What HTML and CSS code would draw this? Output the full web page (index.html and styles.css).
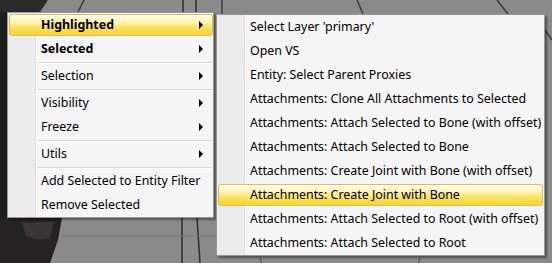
FILE: index.html
```html
<!DOCTYPE html>
<html lang="en">

<head>
    <meta charset="UTF-8">
    <meta name="viewport" content="width=device-width, initial-scale=1.0">
    <title>Context Menu</title>
    <link rel="stylesheet" href="styles.css">
</head>

<body>
    <svg class="scene" width="552" height="263" viewBox="0 0 552 263">
        <rect width="552" height="263" fill="#8a8a8a" />
        <!-- dark figure -->
        <path d="M0 0 H48 L40 12 H0 Z" fill="#2a2a2a" />
        <path d="M0 12 H8 V218 H0 Z" fill="#1e1e1e" />
        <path d="M0 218 H62 L58 240 L50 263 H0 Z" fill="#242222" />
        <path d="M22 222 Q36 224 54 221 L50 238 Q38 242 26 236 Z" fill="#3b3535" />
        <!-- tile lines -->
        <path d="M84 0 L78 12" stroke="#3a3a3a" stroke-width="1.5" />
        <path d="M183 0 V12 M196 0 V12" stroke="#2e2e2e" stroke-width="1.5" />
        <path d="M222 0 V14" stroke="#3a3a3a" stroke-width="1.5" />
        <path d="M357 0 L363 14" stroke="#3a3a3a" stroke-width="1.5" />
        <path d="M497 0 L508 14" stroke="#3a3a3a" stroke-width="1.5" />
        <path d="M545 30 L552 40" stroke="#3a3a3a" stroke-width="1.5" />
        <path d="M182 218 V263 M197 218 L200 263" stroke="#2e2e2e" stroke-width="1.5" />
        <path d="M62 236 H216" stroke="#747474" />
        <path d="M260 258 L262 263 M420 258 L418 263" stroke="#4a4a4a" />
    </svg>

    <div class="stage">
        <div class="menu menu-main">
            <div class="item bold active"><span class="label">Highlighted</span><span class="arrow"></span></div>
            <div class="item bold"><span class="label">Selected</span><span class="arrow"></span></div>
            <div class="sep"></div>
            <div class="item"><span class="label">Selection</span><span class="arrow"></span></div>
            <div class="sep"></div>
            <div class="item"><span class="label">Visibility</span><span class="arrow"></span></div>
            <div class="item"><span class="label">Freeze</span><span class="arrow"></span></div>
            <div class="sep"></div>
            <div class="item"><span class="label">Utils</span><span class="arrow"></span></div>
            <div class="sep"></div>
            <div class="item"><span class="label">Add Selected to Entity Filter</span></div>
            <div class="item"><span class="label">Remove Selected</span></div>
        </div>

        <div class="menu menu-sub">
            <div class="item"><span class="label">Select Layer 'primary'</span></div>
            <div class="item"><span class="label">Open VS</span></div>
            <div class="item"><span class="label">Entity: Select Parent Proxies</span></div>
            <div class="item"><span class="label">Attachments: Clone All Attachments to Selected</span></div>
            <div class="item"><span class="label">Attachments: Attach Selected to Bone (with offset)</span></div>
            <div class="item"><span class="label">Attachments: Attach Selected to Bone</span></div>
            <div class="item"><span class="label">Attachments: Create Joint with Bone (with offset)</span></div>
            <div class="item active"><span class="label">Attachments: Create Joint with Bone</span></div>
            <div class="item"><span class="label">Attachments: Attach Selected to Root (with offset)</span></div>
            <div class="item"><span class="label">Attachments: Attach Selected to Root</span></div>
        </div>
    </div>
</body>

</html>
```

FILE: styles.css
```css
body {
    margin: 0;
    width: 552px;
    height: 263px;
    overflow: hidden;
    position: relative;
    font-family: "Segoe UI", "Noto Sans", sans-serif;
    font-size: 12.4px;
    color: #000000;
}

.scene {
    position: absolute;
    left: 0;
    top: 0;
}

.stage {
    position: relative;
    display: flex;
    align-items: flex-start;
    gap: 2px;
    padding: 12px 0 0 7px;
}

/* menu box with gutter on the left */
.menu {
    display: flex;
    flex-direction: column;
    border: 1px solid #979797;
    background-color: #f5f5f5;
    background-image: linear-gradient(to right,
            #ebebeb 0, #ebebeb 27px,
            #dedede 27px, #dedede 28px,
            #ffffff 28px, #ffffff 29px,
            transparent 29px);
    box-shadow: 2px 2px 2px rgba(0, 0, 0, 0.4);
}

.menu-main {
    width: 205px;
}

.menu-sub {
    width: 327px;
    margin-top: 2px;
}

.item {
    display: flex;
    align-items: center;
    height: 22px;
    margin: 1px 1px 1px 1px;
    padding: 0 9px 0 31px;
    border: 1px solid transparent;
    border-radius: 3px;
    box-sizing: border-box;
}

.menu-main .item {
    margin-right: 0;
}

.label {
    flex: 1;
    white-space: nowrap;
    line-height: 16px;
}

.bold .label {
    font-weight: bold;
}

.arrow {
    width: 0;
    height: 0;
    border-top: 4px solid transparent;
    border-bottom: 4px solid transparent;
    border-left: 4px solid #000000;
}

.item.active {
    border-color: #e2bd52;
    background: linear-gradient(to bottom, #fffbe8 0%, #fff3b8 35%, #fbe468 60%, #f7d840 85%, #f5d34a 100%);
    box-shadow: inset 0 1px 0 rgba(255, 255, 255, 0.8);
}

.sep {
    height: 1px;
    margin: 1px 1px 0 30px;
    background-color: #d7d7d7;
    border-bottom: 1px solid #ffffff;
}
```
